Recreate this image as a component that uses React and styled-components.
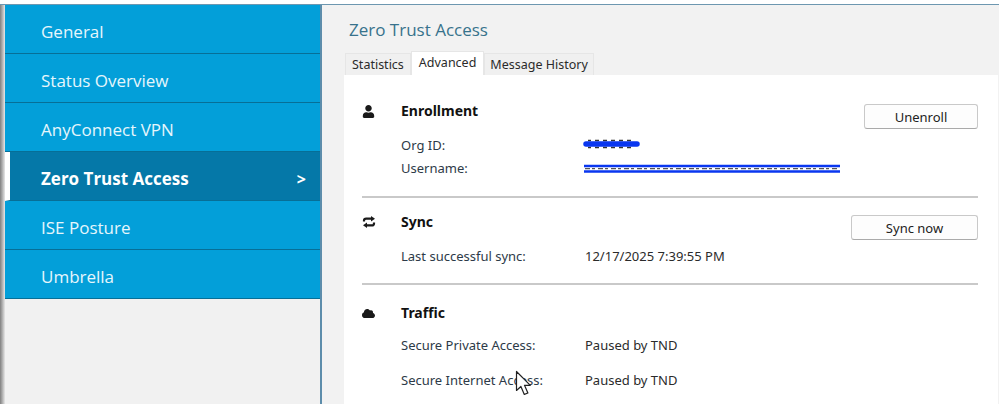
import React from 'react';
import styled, { createGlobalStyle } from 'styled-components';
import { FaUser, FaCloud } from 'react-icons/fa';

const menu = ['General', 'Status Overview', 'AnyConnect VPN', 'Zero Trust Access', 'ISE Posture', 'Umbrella'];
const tabs = [
  { name: 'Statistics', pad: 6 },
  { name: 'Advanced', pad: 7 },
  { name: 'Message History', pad: 5 },
];

const App = () => {
  return (
    <>
      <Global />
      <Page>
        <TopStrip />
        <Main>
          <Sidebar>
            {menu.map((name) => (
              <MenuItem key={name} $active={name === 'Zero Trust Access'}>
                {name}
                {name === 'Zero Trust Access' && <Arrow>&gt;</Arrow>}
              </MenuItem>
            ))}
          </Sidebar>
          <Content>
            <Title>Zero Trust Access</Title>
            <Tabs>
              {tabs.map((tab) => (
                <Tab key={tab.name} $pad={tab.pad} $active={tab.name === 'Advanced'}>{tab.name}</Tab>
              ))}
            </Tabs>
            <Panel>
              <Section $top={28} $bottom={20}>
                <IconCell><FaUser /></IconCell>
                <Body>
                  <Header>
                    <Heading>Enrollment</Heading>
                    <Button $width={114}>Unenroll</Button>
                  </Header>
                  <Rows $gap={7}>
                    <Row>
                      <Label>Org ID:</Label>
                      <Redacted width="57" height="12" viewBox="0 0 57 12">
                        <path d="M5 1.5h3m4 0h4m4 0h4m4 0h4m4 0h4m4 0h4M5 8.5h3m4 0h4m4 0h4m4 0h4m4 0h4m4 0h4" stroke="#333" strokeWidth="1.4" />
                        <path d="M3 5h51" stroke="#0a37f0" strokeWidth="5.5" strokeLinecap="round" />
                      </Redacted>
                    </Row>
                    <Row>
                      <Label>Username:</Label>
                      <Redacted width="258" height="14" viewBox="0 0 258 14">
                        <path d="M2 7.7h254" stroke="#fff" strokeWidth="3" />
                        <path d="M2 7.7h254" stroke="#555" strokeWidth="1.2" strokeDasharray="5 2 3 3" />
                        <path d="M1 5h256M1 10.5h256" stroke="#0a37f0" strokeWidth="2.4" />
                      </Redacted>
                    </Row>
                  </Rows>
                </Body>
              </Section>
              <Divider />
              <Section $top={16} $bottom={19}>
                <IconCell>
                  <svg width="14" height="12" viewBox="0 0 14 12" fill="none">
                    <path d="M2 5.5V4.6C2 3.4 3 2.6 4.2 2.6H9.5" stroke="#1a1a1a" strokeWidth="2.2" />
                    <path d="M9 0l4 2.7-4 2.7z" fill="#1a1a1a" />
                    <path d="M12 6.5v.9c0 1.2-1 2-2.2 2H4.5" stroke="#1a1a1a" strokeWidth="2.2" />
                    <path d="M5 12L1 9.3l4-2.7z" fill="#1a1a1a" />
                  </svg>
                </IconCell>
                <Body>
                  <Header>
                    <Heading>Sync</Heading>
                    <Button $width={127}>Sync now</Button>
                  </Header>
                  <Rows>
                    <Row>
                      <Label>Last successful sync:</Label>
                      <Value>12/17/2025 7:39:55 PM</Value>
                    </Row>
                  </Rows>
                </Body>
              </Section>
              <Divider />
              <Section $top={20} $bottom={0}>
                <IconCell><FaCloud /></IconCell>
                <Body>
                  <Heading>Traffic</Heading>
                  <Rows $gap={19} $top={16}>
                    <Row>
                      <Label>Secure Private Access:</Label>
                      <Value>Paused by TND</Value>
                    </Row>
                    <Row>
                      <Label>Secure Internet Access:</Label>
                      <Value>Paused by TND</Value>
                    </Row>
                  </Rows>
                </Body>
              </Section>
              <Cursor width="17" height="27" viewBox="0 0 17 27">
                <path
                  d="M1.5 1.5v19l4.4-4 3.4 8 3.6-1.6-3.4-7.6h5.8z"
                  fill="#fff"
                  stroke="#222"
                  strokeWidth="1.2"
                  strokeLinejoin="round"
                />
              </Cursor>
            </Panel>
          </Content>
        </Main>
      </Page>
    </>
  );
};

export default App;

const Global = createGlobalStyle`
  html, body {
    margin: 0;
    padding: 0;
    background: #fff;
  }
  * {
    box-sizing: border-box;
  }
`;

const Page = styled.div`
  width: 999px;
  height: 404px;
  overflow: hidden;
  display: flex;
  flex-direction: column;
  font-family: 'Noto Sans', 'Open Sans', sans-serif;
`;

const TopStrip = styled.div`
  height: 5px;
  flex: none;
  background: #fff;
  border-bottom: 1px solid #6d97b0;
`;

const Main = styled.div`
  flex: 1;
  display: flex;
  min-height: 0;
`;

const Sidebar = styled.div`
  width: 322px;
  flex: none;
  padding-left: 5px;
  background: linear-gradient(to right, #808080, #a8a8a8 2px, #e8e8e8 5px, #f1f1f1 5px);
  border-right: 2px solid #5d8dab;
`;

const MenuItem = styled.div`
  height: 49px;
  display: flex;
  align-items: center;
  justify-content: space-between;
  padding: 5px 14px 0 ${(p) => (p.$active ? '31px' : '36px')};
  background: ${(p) => (p.$active ? '#0578a8' : '#039fd9')};
  border-bottom: 1px solid #076f97;
  border-left: ${(p) => (p.$active ? '5px solid #fff' : 'none')};
  color: ${(p) => (p.$active ? '#fff' : '#e6f6fc')};
  font-family: 'Open Sans', sans-serif;
  font-size: 17px;
  font-weight: ${(p) => (p.$active ? 700 : 400)};
`;

const Arrow = styled.span`
  font-size: 16px;
  font-weight: 700;
`;

const Content = styled.div`
  flex: 1;
  display: flex;
  flex-direction: column;
  min-width: 0;
  background: #f2f2f2;
  padding-left: 22px;
`;

const Title = styled.div`
  height: 46px;
  flex: none;
  padding: 13px 0 0 5px;
  color: #37728c;
  font-family: 'Open Sans', sans-serif;
  font-size: 17px;
  line-height: 24px;
`;

const Tabs = styled.div`
  display: flex;
  align-items: flex-end;
  height: 24px;
  flex: none;
  padding-left: 1px;
`;

const Tab = styled.div`
  height: ${(p) => (p.$active ? '24px' : '22px')};
  padding: 0 ${(p) => p.$pad}px ${(p) => (p.$active ? '3px' : '0')};
  display: flex;
  align-items: center;
  background: ${(p) => (p.$active ? '#fff' : '#f0f0f0')};
  border: 1px solid #e6e6e6;
  border-bottom: none;
  color: #2b2b2b;
  font-size: 12.5px;
`;

const Panel = styled.div`
  position: relative;
  flex: 1;
  margin-right: 1px;
  padding: 0 20px 0 18px;
  background: #fff;
`;

const Section = styled.div`
  display: flex;
  padding: ${(p) => p.$top}px 0 ${(p) => p.$bottom}px;
`;

const IconCell = styled.div`
  width: 39px;
  flex: none;
  height: 16px;
  display: flex;
  align-items: center;
  color: #1a1a1a;
  font-size: 13px;
`;

const Body = styled.div`
  flex: 1;
`;

const Header = styled.div`
  display: flex;
  justify-content: space-between;
  align-items: flex-start;
  height: 26px;
`;

const Heading = styled.div`
  color: #111;
  font-size: 14px;
  font-weight: 700;
  line-height: 16px;
`;

const Button = styled.div`
  width: ${(p) => p.$width}px;
  height: 25px;
  margin-top: 1px;
  display: flex;
  align-items: center;
  justify-content: center;
  background: #fdfdfd;
  border: 1px solid #c9c9c9;
  border-bottom-color: #aaa;
  border-radius: 3px;
  color: #222;
  font-size: 13px;
`;

const Rows = styled.div`
  display: flex;
  flex-direction: column;
  gap: ${(p) => p.$gap || 0}px;
  margin-top: ${(p) => (p.$top === undefined ? 8 : p.$top)}px;
`;

const Row = styled.div`
  display: flex;
  align-items: center;
  height: 16px;
  font-size: 13px;
  color: #2d3a48;
`;

const Label = styled.div`
  width: 184px;
  flex: none;
`;

const Value = styled.div`
  color: #2b2b2b;
`;

const Redacted = styled.svg`
  display: block;
  margin-left: -2px;
`;

const Divider = styled.div`
  height: 2px;
  background: #c9c9c9;
`;

const Cursor = styled.svg`
  position: absolute;
  left: 171px;
  top: 295px;
`;
